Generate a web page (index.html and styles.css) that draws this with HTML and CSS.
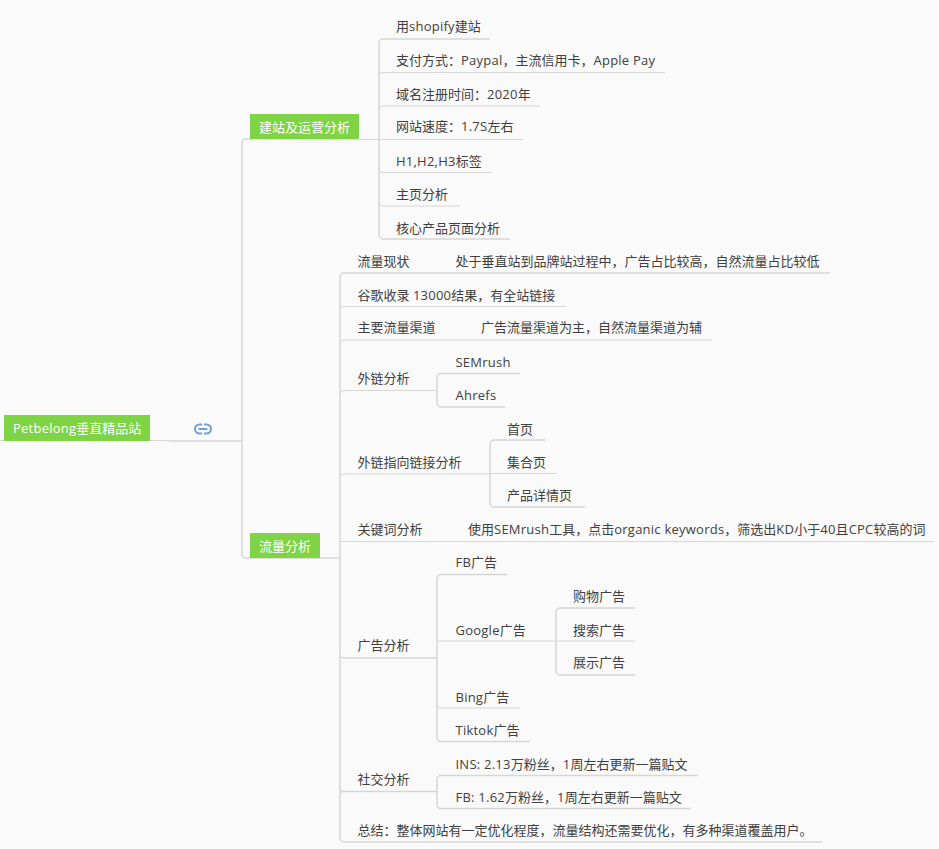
FILE: index.html
```html
<!DOCTYPE html>
<html lang="zh">
<head>
<meta charset="utf-8">
<title>Petbelong垂直精品站</title>
<link rel="stylesheet" href="styles.css">
</head>
<body>
<main class="canvas">
<svg class="links" width="939" height="849" viewBox="0 0 939 849">
  <path class="thin" d="M0 440.500H170"/>
  <path d="M170 441H241"/>
  <path d="M359 139H246a4 4 0 0 0-4 4V554a4 4 0 0 0 4 4H339"/>
  <path d="M490 39H383a4 4 0 0 0-4 4V235a4 4 0 0 0 4 4H510"/>
  <path class="thin" d="M665 72.500H383a4 4 0 0 0-4 4"/>
  <path class="thin" d="M540 106H383a4 4 0 0 0-4 4"/>
  <path class="thin" d="M523 139.500H359"/>
  <path class="thin" d="M492 172.500H383a4 4 0 0 1-4-4"/>
  <path class="thin" d="M460 206H383a4 4 0 0 1-4-4"/>
  <path d="M830 273H344a4 4 0 0 0-4 4V838a4 4 0 0 0 4 4H822"/>
  <path class="thin" d="M566 306.500H344a4 4 0 0 0-4 4"/>
  <path class="thin" d="M712 340H344a4 4 0 0 0-4 4"/>
  <path class="thin" d="M437 390.500H344a4 4 0 0 0-4 4"/>
  <path d="M520 373.500H441a4 4 0 0 0-4 4V403a4 4 0 0 0 4 4H505"/>
  <path class="thin" d="M489 474H344a4 4 0 0 0-4 4"/>
  <path d="M546 440H494a4 4 0 0 0-4 4V503a4 4 0 0 0 4 4H585"/>
  <path class="thin" d="M557 473.500H490"/>
  <path class="thin" d="M934 541.500H340"/>
  <path d="M437 658H344a4 4 0 0 1-4-4"/>
  <path d="M507 574.500H441a4 4 0 0 0-4 4V737a4 4 0 0 0 4 4.500H530"/>
  <path class="thin" d="M555 641H438"/>
  <path d="M635 608H560a4 4 0 0 0-4 4V671a4 4 0 0 0 4 4H635"/>
  <path class="thin" d="M635 641H556"/>
  <path class="thin" d="M520 708H441a4 4 0 0 1-4-4"/>
  <path d="M437 791.500H344a4 4 0 0 1-4-4"/>
  <path class="thin" d="M437 791.500H344a4 4 0 0 0-4 4"/>
  <path d="M698 775.500H441a4 4 0 0 0-4 4V804a4 4 0 0 0 4 4.500H691"/>
</svg>

<div class="node root"><span class="lat">Petbelong</span>垂直精品站</div>
<svg class="link-icon" width="18" height="12" viewBox="0 0 18 12" fill="none">
  <path d="M8 1.500H5.500a4.500 4.500 0 0 0 0 9H8"/>
  <path d="M10 1.500h2.500a4.500 4.500 0 0 1 0 9H10"/>
  <path d="M4.500 6H13.500"/>
</svg>

<div class="node branch b1">建站及运营分析</div>
<div class="node branch b2">流量分析</div>

<div class="node a1">用<span class="lat">shopify</span>建站</div>
<div class="node a2">支付方式：<span class="lat">Paypal</span>，主流信用卡，<span class="lat">Apple Pay</span></div>
<div class="node a3">域名注册时间：<span class="lat">2020</span>年</div>
<div class="node a4">网站速度：<span class="lat">1.7S</span>左右</div>
<div class="node a5"><span class="lat">H1,H2,H3</span>标签</div>
<div class="node a6">主页分析</div>
<div class="node a7">核心产品页面分析</div>

<div class="node c1">流量现状</div>
<div class="node c1x">处于垂直站到品牌站过程中，广告占比较高，自然流量占比较低</div>
<div class="node c2">谷歌收录 <span class="lat">13000</span>结果，有全站链接</div>
<div class="node c3">主要流量渠道</div>
<div class="node c3x">广告流量渠道为主，自然流量渠道为辅</div>
<div class="node c4">外链分析</div>
<div class="node d1"><span class="lat">SEMrush</span></div>
<div class="node d2"><span class="lat">Ahrefs</span></div>
<div class="node c5">外链指向链接分析</div>
<div class="node e1">首页</div>
<div class="node e2">集合页</div>
<div class="node e3">产品详情页</div>
<div class="node c6">关键词分析</div>
<div class="node c6x">使用<span class="lat">SEMrush</span>工具，点击<span class="lat">organic keywords</span>，筛选出<span class="lat">KD</span>小于<span class="lat">40</span>且<span class="lat">CPC</span>较高的词</div>
<div class="node c7">广告分析</div>
<div class="node f1"><span class="lat">FB</span>广告</div>
<div class="node f2"><span class="lat">Google</span>广告</div>
<div class="node g1">购物广告</div>
<div class="node g2">搜索广告</div>
<div class="node g3">展示广告</div>
<div class="node f3"><span class="lat">Bing</span>广告</div>
<div class="node f4"><span class="lat">Tiktok</span>广告</div>
<div class="node c8">社交分析</div>
<div class="node h1"><span class="lat">INS: 2.13</span>万粉丝，<span class="lat">1</span>周左右更新一篇贴文</div>
<div class="node h2"><span class="lat">FB: 1.62</span>万粉丝，<span class="lat">1</span>周左右更新一篇贴文</div>
<div class="node c9">总结：整体网站有一定优化程度，流量结构还需要优化，有多种渠道覆盖用户。</div>
</main>
</body>
</html>
```

FILE: styles.css
```css
html, body { margin: 0; padding: 0; background: #fafafa; }
.canvas {
  position: relative;
  width: 939px;
  height: 849px;
  overflow: hidden;
  font-family: "Open Sans", "Noto Sans CJK SC", sans-serif;
  font-size: 13px;
  line-height: 18px;
  color: #404040;
}
.lat { letter-spacing: 0.24px; }
.links { position: absolute; left: 0; top: 0; fill: none; }
.links path { stroke: #d6d6d6; stroke-width: 1.5; fill: none; }
.links path.thin { stroke-width: 1.2; }

.node { position: absolute; white-space: nowrap; }

.root, .branch { background: #7ed444; color: #fff; height: 25px; line-height: 26px; }
.root { left: 4px; top: 415px; width: 137px; height: 26px; padding-left: 9px; }
.b1 { left: 250px; top: 114px; width: 109px; text-align: center; }
.b2 { left: 250px; top: 533px; width: 70px; text-align: center; }

.link-icon { position: absolute; left: 194px; top: 423px; }
.link-icon path { stroke: #6f9ed8; stroke-width: 2; }

.a1 { left: 396px; top: 17px; }
.a2 { left: 396px; top: 51px; }
.a3 { left: 396px; top: 85px; }
.a4 { left: 396px; top: 117px; }
.a5 { left: 396px; top: 152px; }
.a6 { left: 396px; top: 185px; }
.a7 { left: 396px; top: 219px; }

.c1 { left: 357.5px; top: 252px; }
.c1x { left: 455.5px; top: 252px; }
.c2 { left: 357.5px; top: 286px; }
.c3 { left: 357.5px; top: 318px; }
.c3x { left: 481px; top: 318px; }
.c4 { left: 357.5px; top: 369px; }
.d1 { left: 455.5px; top: 353px; }
.d2 { left: 455.5px; top: 386px; }
.c5 { left: 357.5px; top: 453px; }
.e1 { left: 507px; top: 420px; }
.e2 { left: 507px; top: 453px; }
.e3 { left: 507px; top: 486px; }
.c6 { left: 357.5px; top: 520px; }
.c6x { left: 468px; top: 520px; }
.c7 { left: 357.5px; top: 636px; }
.f1 { left: 455.5px; top: 553px; }
.f2 { left: 455.5px; top: 621px; }
.g1 { left: 573px; top: 587px; }
.g2 { left: 573px; top: 621px; }
.g3 { left: 573px; top: 653px; }
.f3 { left: 455.5px; top: 688px; }
.f4 { left: 455.5px; top: 721px; }
.c8 { left: 357.5px; top: 770px; }
.h1 { left: 455.5px; top: 755px; }
.h2 { left: 455.5px; top: 788px; }
.c9 { left: 357.5px; top: 821px; }
```
